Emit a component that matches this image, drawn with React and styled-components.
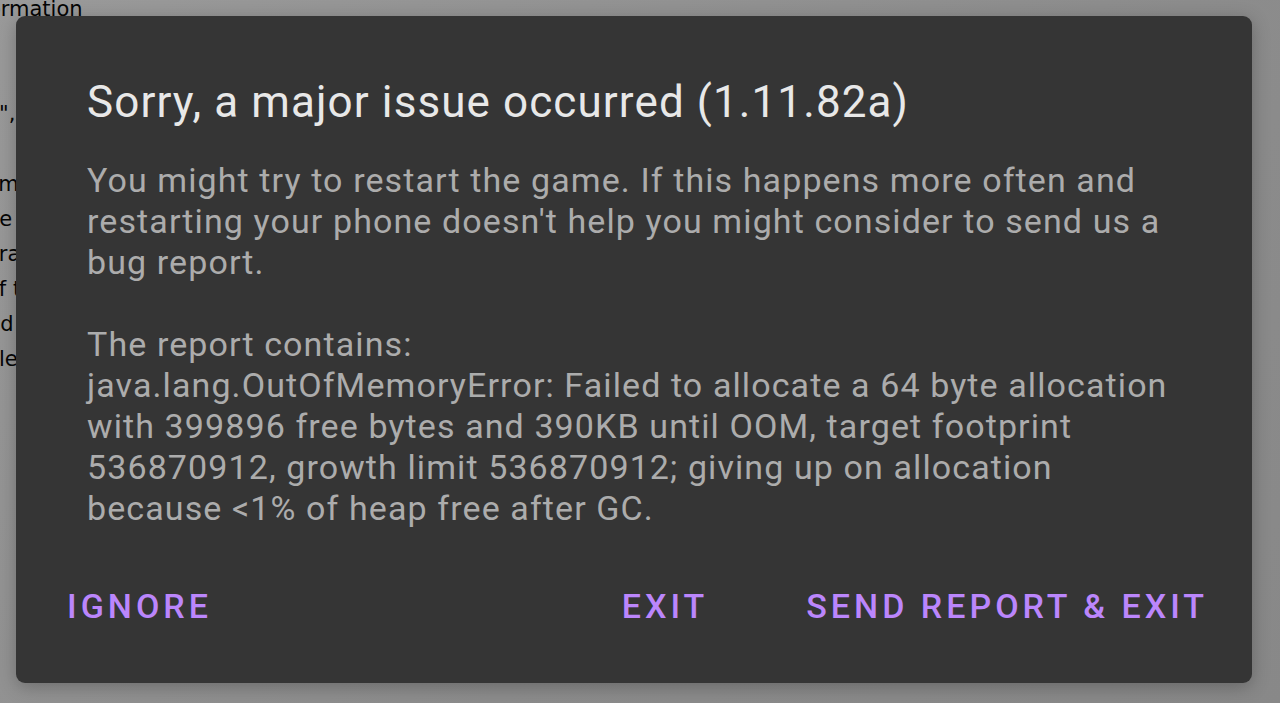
import React from "react";
import styled, { createGlobalStyle } from "styled-components";

const GlobalStyle = createGlobalStyle`
  html, body {
    margin: 0;
    padding: 0;
    width: 1280px;
    height: 703px;
    overflow: hidden;
    background: #8d8d8d;
  }
  #root {
    position: relative;
    width: 1280px;
    height: 703px;
    overflow: hidden;
  }
`;

const Page = styled.div`
  display: flex;
  flex-direction: column;
  margin-top: -8px;
  font-family: "DejaVu Sans", sans-serif;
  font-size: 21px;
  line-height: 35px;
  color: #050505;
  background: linear-gradient(135deg, #9a9a9a 0%, #8c8c8c 60%, #888 100%);
  height: 720px;
`;

const PageLine = styled.div`
  white-space: nowrap;
  height: 35px;
  margin-left: ${(p) => p.$shift || 0}px;
`;

const Dialog = styled.div`
  position: absolute;
  left: 16px;
  top: 16px;
  width: 1236px;
  height: 667px;
  box-sizing: border-box;
  background: #353535;
  border-radius: 9px;
  box-shadow: 0 4px 18px rgba(0, 0, 0, 0.25);
  display: flex;
  flex-direction: column;
  font-family: Roboto, "Noto Sans", sans-serif;
`;

const Content = styled.div`
  padding: 58px 71px 0 71px;
  flex: 1;
`;

const Title = styled.h1`
  margin: 0 0 30px;
  font-size: 44px;
  line-height: 56px;
  font-weight: 400;
  color: #e8e8e8;
  letter-spacing: 1.1px;
`;

const Message = styled.p`
  margin: 0;
  font-size: 34px;
  line-height: 41px;
  font-weight: 400;
  color: #acacac;
  letter-spacing: 1.1px;
  white-space: pre-wrap;
`;

const Actions = styled.div`
  display: flex;
  align-items: center;
  padding: 0 28px 45px 35px;
`;

const Spacer = styled.div`
  flex: 1;
`;

const ActionButton = styled.button`
  background: none;
  border: none;
  padding: 12px 16px;
  margin-left: ${(p) => (p.$gap ? p.$gap : 0)}px;
  font-family: Roboto, "Noto Sans", sans-serif;
  font-size: 34px;
  font-weight: 500;
  letter-spacing: 4px;
  color: #bb86fc;
  text-transform: uppercase;
  cursor: pointer;
`;

const backLines = [
  { text: "Information", shift: -39 },
  { text: "" },
  { text: "" },
  { text: "\",sans-serif", shift: -1 },
  { text: "" },
  { text: "nmap", shift: -15 },
  { text: "ne", shift: -14 },
  { text: "ara", shift: -14 },
  { text: "of the", shift: -14 },
  { text: "nd", shift: -13 },
  { text: "le", shift: -1 },
  { text: "" },
  { text: "" },
];

export default function App() {
  return (
    <>
      <GlobalStyle />
      <Page>
        {backLines.map((l, i) => (
          <PageLine key={i} $shift={l.shift}>
            {l.text}
          </PageLine>
        ))}
      </Page>
      <Dialog>
        <Content>
          <Title>Sorry, a major issue occurred (1.11.82a)</Title>
          <Message>
            {"You might try to restart the game. If this happens more often and restarting your phone doesn't help you might consider to send us a bug report.\n\nThe report contains:\njava.lang.OutOfMemoryError: Failed to allocate a 64 byte allocation with 399896 free bytes and 390KB until OOM, target footprint 536870912, growth limit 536870912; giving up on allocation because <1% of heap free after GC."}
          </Message>
        </Content>
        <Actions>
          <ActionButton>Ignore</ActionButton>
          <Spacer />
          <ActionButton>Exit</ActionButton>
          <ActionButton $gap={66}>Send report &amp; exit</ActionButton>
        </Actions>
      </Dialog>
    </>
  );
}
